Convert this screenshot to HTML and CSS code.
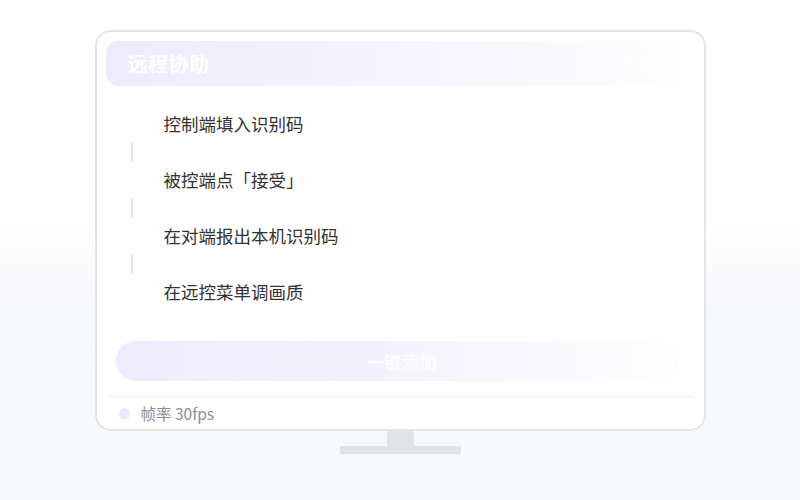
FILE: index.html
```html
<!DOCTYPE html>
<html lang="zh-CN">
    <head>
        <meta charset="utf-8">
        <title>远程协助</title>
        <link rel="stylesheet" href="styles.css">
    </head>

    <body>
        <div class="monitor">
            <div class="screen">
                <div class="title-bar">
                    <h1 class="title">远程协助</h1>
                    <div class="dots"><span></span><span></span><span></span></div>
                </div>

                <ol class="steps">
                    <li class="step">控制端填入识别码</li>
                    <li class="link"></li>
                    <li class="step">被控端点「接受」</li>
                    <li class="link"></li>
                    <li class="step">在对端报出本机识别码</li>
                    <li class="link"></li>
                    <li class="step">在远控菜单调画质</li>
                </ol>

                <button class="add-button">一键添加<span class="chevron">›</span></button>

                <div class="status">
                    <span class="status-dot"></span>
                    <span class="status-text">帧率 30fps</span>
                </div>
            </div>
            <div class="neck"></div>
            <div class="base"></div>
        </div>
    </body>
</html>
```

FILE: styles.css
```css
html, body {
    margin: 0;
    height: 100%;
}

body {
    background: linear-gradient(to bottom, #ffffff 0, #ffffff 220px, #f7f8fa 300px, #f8f9fb 100%);
    font-family: "Noto Sans CJK SC", "Noto Sans", sans-serif;
    color: #333;
}

.monitor {
    display: flex;
    flex-direction: column;
    align-items: center;
    padding-top: 30px;
}

.screen {
    box-sizing: border-box;
    width: 611px;
    height: 401px;
    border: 2px solid #e3e5ea;
    border-radius: 16px;
    background: #fff;
    display: flex;
    flex-direction: column;
}

.title-bar {
    display: flex;
    align-items: center;
    justify-content: space-between;
    height: 45px;
    margin: 9px 16px 0 9px;
    padding: 0 18px 0 22px;
    border-radius: 12px;
    background: linear-gradient(to right, #efebfd 0%, #f5f3fe 45%, #fdfdff 95%, #ffffff 100%);
}

.title {
    margin: 0;
    font-size: 20px;
    font-weight: 700;
    color: #fff;
    letter-spacing: 0.5px;
}

.dots {
    display: flex;
    gap: 15px;
}

.dots span {
    width: 5px;
    height: 5px;
    border-radius: 50%;
    background: #fff;
}

.steps {
    list-style: none;
    margin: 20px 0 0 0;
    padding: 0;
}

.step {
    height: 36px;
    line-height: 36px;
    padding-left: 67px;
    font-size: 17.5px;
    color: #333;
}

.link {
    width: 2px;
    height: 20px;
    margin-left: 34px;
    background: #e4e6ea;
}

.add-button {
    display: flex;
    align-items: center;
    justify-content: center;
    position: relative;
    height: 40px;
    margin: 31px 16px 0 19px;
    border: 0;
    border-radius: 20px;
    background: linear-gradient(to right, #efebfd 0%, #f4f1fe 45%, #fdfdff 92%, #ffffff 100%);
    font-family: inherit;
    font-size: 17.5px;
    color: #fff;
}

.chevron {
    position: absolute;
    right: 8px;
    top: 8px;
    font-size: 18px;
    color: #f8f8fb;
}

.status {
    display: flex;
    align-items: center;
    height: 32px;
    margin: 15px 10px 0 11px;
    padding-left: 11px;
    border-top: 1px solid #eceef2;
}

.status-dot {
    width: 11px;
    height: 11px;
    border-radius: 50%;
    background: #ece8fb;
    margin-right: 11px;
}

.status-text {
    font-size: 15.5px;
    color: #8a8f99;
}

.neck {
    width: 27px;
    height: 15px;
    background: #e0e3e8;
}

.base {
    width: 121px;
    height: 8px;
    background: #e0e3e8;
}
```
